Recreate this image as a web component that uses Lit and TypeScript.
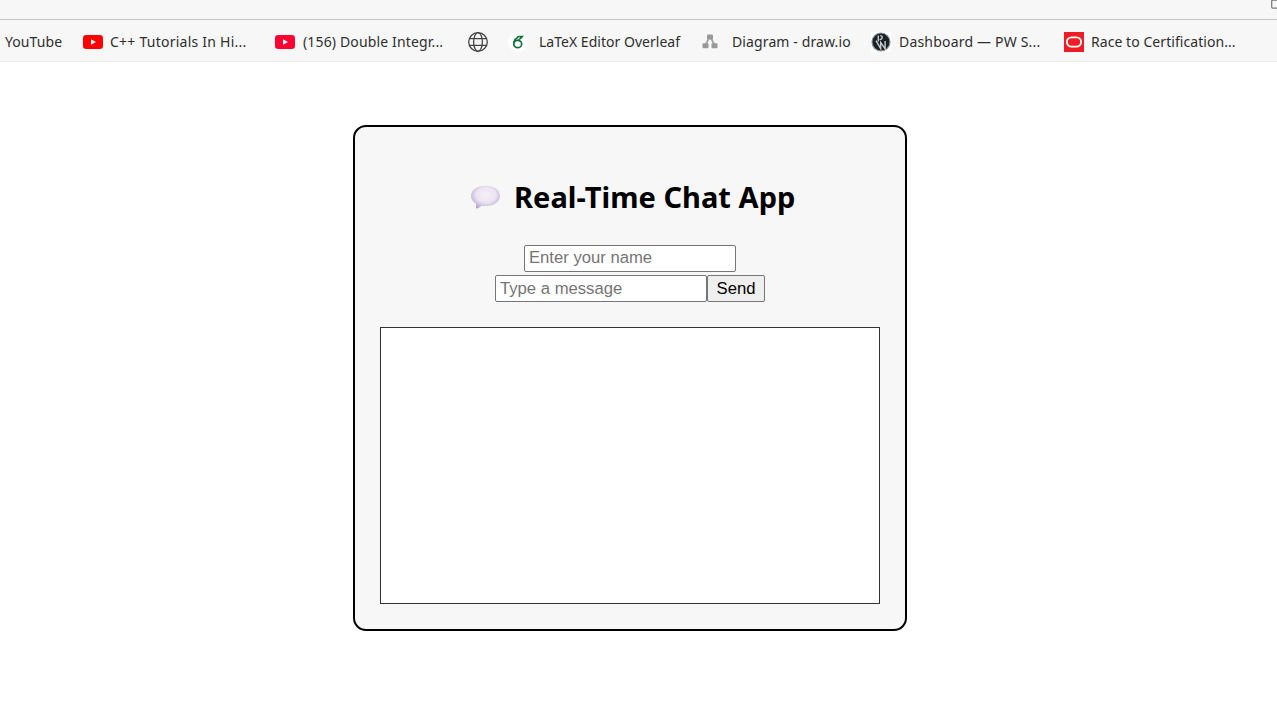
import { LitElement, html, css, TemplateResult } from "lit";
import { customElement } from "lit/decorators.js";

interface Bookmark {
  label: string;
  icon?: TemplateResult;
  width: number;
  gap: number;
  spacing: number;
}

const youtube = (color: string) => html`<svg width="20" height="20" viewBox="0 0 20 20">
  <rect x="0" y="3" width="20" height="14" rx="3.2" fill=${color} />
  <path d="M8 7.2 13 10 8 12.8Z" fill="#fff" />
</svg>`;

const globe = html`<svg width="20" height="20" viewBox="0 0 20 20" fill="none" stroke="#444" stroke-width="1.3">
  <circle cx="10" cy="10" r="9.3" />
  <ellipse cx="10" cy="10" rx="4.4" ry="9.3" />
  <path d="M1.4 6.6H18.6M1.4 13.4H18.6" />
</svg>`;

const overleaf = html`<svg width="20" height="20" viewBox="0 0 20 20" fill="none" stroke="#13703a">
  <circle cx="10" cy="10" r="10" fill="#fff" stroke="none" />
  <ellipse cx="9.7" cy="12" rx="4" ry="3.7" stroke-width="1.7" />
  <path d="M5.8 11.5C5.8 8.2 8 6.2 10.4 5.2" stroke-width="1.6" />
  <path d="M8.3 4.8C10.8 3.5 13 3.8 15.8 3.5 14.7 6.5 12 8 8.8 8.5 10.8 7.2 11.8 6.4 12.2 5.6Z" fill="#13703a" stroke="none" />
</svg>`;

const drawio = html`<svg width="16" height="20" viewBox="0 0 16 20" fill="#999">
  <path d="M7 6 3.5 13M9 6 12.5 13" stroke="#a4a4a4" stroke-width="1.8" />
  <rect x="5" y="2.5" width="6" height="5" rx="1" />
  <rect x="0.5" y="11.2" width="6" height="5" rx="1" />
  <rect x="9.5" y="11.2" width="6" height="5" rx="1" />
</svg>`;

const pw = html`<svg width="20" height="20" viewBox="0 0 20 20">
  <rect width="20" height="20" fill="#fdfdfd" />
  <circle cx="10" cy="10" r="9" fill="#192226" stroke="#8b9295" stroke-width="1.1" />
  <g fill="none" stroke="#c8cdd0" stroke-width="1.4">
    <path d="M7.3 3.4V9.6M9.2 3.6C12 3.6 12 7.4 8.6 7.6" />
    <path d="M5 8.6 9.7 16.6V10.4L14.1 16.8V9" />
  </g>
</svg>`;

const oracle = html`<svg width="20" height="20" viewBox="0 0 20 20">
  <rect width="20" height="20" fill="#ee1c25" />
  <rect x="2.9" y="5.4" width="14.2" height="9.2" rx="4.6" fill="none" stroke="#fff" stroke-width="1.9" />
</svg>`;

const bookmarks: Bookmark[] = [
  { label: "YouTube", width: 78, gap: 0, spacing: 0.08 },
  { label: "C++ Tutorials In Hi...", icon: youtube("#f00"), width: 192, gap: 7, spacing: 0.24 },
  { label: "(156) Double Integr...", icon: youtube("#ff0033"), width: 193, gap: 8, spacing: 0.15 },
  { label: "", icon: globe, width: 40, gap: 0, spacing: 0 },
  { label: "LaTeX Editor Overleaf", icon: overleaf, width: 194, gap: 11, spacing: 0.02 },
  { label: "Diagram - draw.io", icon: drawio, width: 169, gap: 14, spacing: 0.12 },
  { label: "Dashboard — PW S...", icon: pw, width: 193, gap: 8, spacing: 0.19 },
  { label: "Race to Certification...", icon: oracle, width: 200, gap: 7, spacing: 0.06 },
];

@customElement("bookmark-bar")
class BookmarkBar extends LitElement {
  static styles = css`
    :host {
      display: block;
      font: 14px/20px "Noto Sans", sans-serif;
      color: #2e2e2e;
    }
    .toolbar {
      display: flex;
      justify-content: flex-end;
      height: 19px;
      background: #f7f7f7;
      border-bottom: 1px solid #c4c4c4;
    }
    .toolbar svg {
      display: block;
    }
    .bar {
      display: flex;
      align-items: center;
      box-sizing: border-box;
      height: 42px;
      padding: 2px 0 0 5px;
      background: #f7f7f7;
      border-bottom: 1px solid #e9e9e9;
      overflow: hidden;
    }
    .item {
      display: flex;
      align-items: center;
      flex: none;
      white-space: nowrap;
    }
    .item svg {
      display: block;
      flex: none;
    }
  `;
  render() {
    return html`
      <div class="toolbar">
        <svg width="6" height="10" viewBox="0 0 6 10" fill="none" stroke="#777">
          <rect x="0.7" y="0.2" width="9" height="8" rx="1" stroke-width="1.2" />
        </svg>
      </div>
      <nav class="bar">
        ${bookmarks.map(
          (b) => html`<div class="item" style="width:${b.width}px;gap:${b.gap}px">
            ${b.icon ?? ""}${b.label
              ? html`<span style="letter-spacing:${b.spacing}px">${b.label}</span>`
              : ""}
          </div>`
        )}
      </nav>
    `;
  }
}

@customElement("app-root")
class AppRoot extends LitElement {
  static styles = css`
    :host {
      display: block;
      height: 728px;
      overflow: hidden;
      background: #fff;
      font-family: "Liberation Sans", Arial, sans-serif;
    }
    .card {
      box-sizing: border-box;
      width: 554px;
      height: 506px;
      margin: 63px 0 0 353px;
      padding: 50px 25px 25px;
      border: 2px solid #000;
      border-radius: 13px;
      background: #f7f7f7;
      display: flex;
      flex-direction: column;
      align-items: center;
    }
    .title {
      display: flex;
      align-items: center;
      gap: 14px;
      width: 325px;
      height: 40px;
      margin: 0 0 28px 5px;
      font: bold 29px/40px "Noto Sans", sans-serif;
      letter-spacing: 0.04px;
      white-space: nowrap;
      color: #000;
    }
    .title svg {
      display: block;
      flex: none;
    }
    .row {
      display: flex;
      margin-bottom: 3px;
    }
    .field,
    .send {
      box-sizing: border-box;
      height: 27px;
      margin: 0;
      border: 1px solid #767676;
      border-radius: 2px;
      font: 16.67px/19px "Liberation Sans", Arial, sans-serif;
    }
    .field {
      width: 212px;
      padding: 1px 4px 3px;
      background: #fff;
    }
    .message {
      padding: 2px 4px;
    }
    .field::placeholder {
      color: #757575;
    }
    .send {
      width: 58px;
      padding: 0 0 1px;
      background: #efefef;
      color: #000;
    }
    .messages {
      box-sizing: border-box;
      width: 500px;
      height: 277px;
      margin-top: 22px;
      border: 1px solid #333;
      background: #fff;
    }
  `;
  render() {
    return html`
      <bookmark-bar></bookmark-bar>
      <main class="card">
        <h2 class="title">
          <svg width="30" height="24" viewBox="0 0 30 24">
            <defs>
              <radialGradient id="bubble" cx="0.52" cy="0.4" r="0.66">
                <stop offset="0" stop-color="#f6f1f8" />
                <stop offset="0.5" stop-color="#ece4f2" />
                <stop offset="1" stop-color="#b09dcd" />
              </radialGradient>
            </defs>
            <path
              d="M15.500 0.800C7.400 0.800 1 5 1 11c0 3.200 2 6 5 7.800V23.600c2.400-.3 4.300-1.500 5.700-2.900 1.200.2 2.500.3 3.900.3C23.700 21 30 17 30 11 30 5 23.700 0.800 15.500 0.800Z"
              fill="url(#bubble)"
            />
          </svg>
          <span>Real-Time Chat App</span>
        </h2>
        <div class="row"><input class="field" placeholder="Enter your name" /></div>
        <div class="row">
          <input class="field message" placeholder="Type a message" /><button class="send">Send</button>
        </div>
        <div class="messages"></div>
      </main>
    `;
  }
}
